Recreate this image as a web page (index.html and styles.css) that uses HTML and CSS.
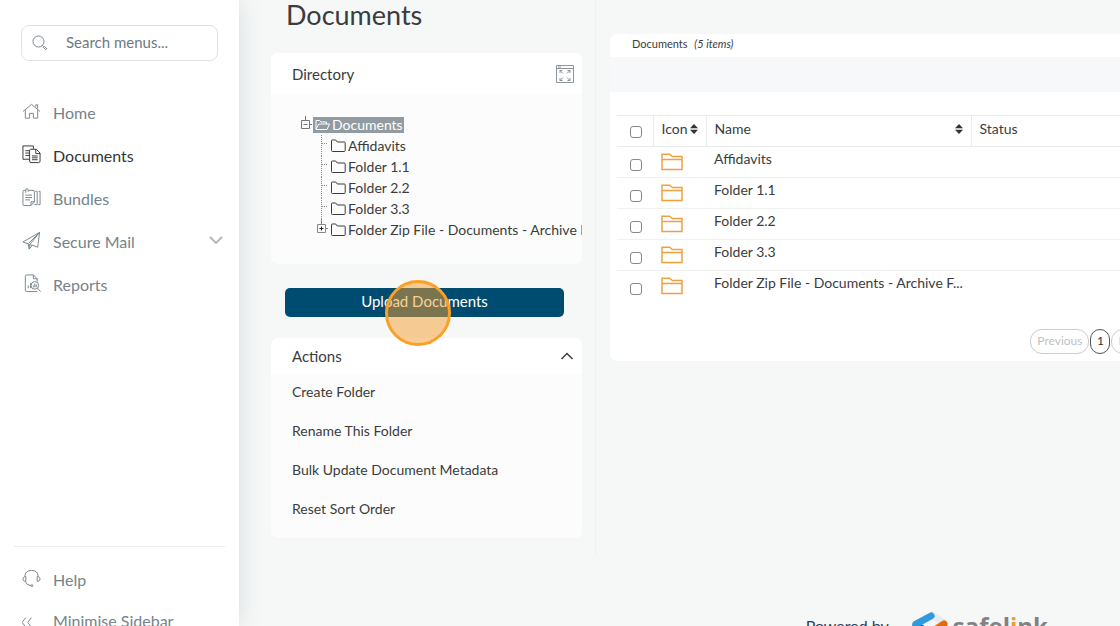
FILE: index.html
```html
<!DOCTYPE html>
<html lang="en">
<head>
<meta charset="utf-8">
<title>Documents</title>
<link rel="stylesheet" href="styles.css">
</head>
<body>
<svg class="defs" aria-hidden="true">
  <symbol id="folder" viewBox="0 0 15 13"><path d="M.5 11V1.800q0-.8.8-.8h3.400l1.600 2h7q.9 0 .9.900v7.600q0 1-1 1H1.500q-1 0-1-1z"/></symbol>
  <symbol id="folder-lg" viewBox="0 0 22 18"><path d="M1 16.500V1.200h7.500l3 2.300H21v13zM1 6.500h20"/></symbol>
  <symbol id="sort" viewBox="0 0 8 10"><path d="M4 0l4 4.200H0zM4 10l4-4.200H0z"/></symbol>
  <symbol id="branch" viewBox="0 0 14 21"><path d="M4.500 0v21M5 8.500h6" stroke-dasharray="1 1"/></symbol>
</svg>
<aside class="sidebar">
  <label class="search">
    <svg class="icon search-icon" viewBox="0 0 16 16"><circle cx="6.500" cy="6.500" r="5.500"/><path d="M10.500 10.500l1 1M11.300 12.300l1-1 2.500 2.500-1 1z"/></svg>
    <input type="text" placeholder="Search menus..." aria-label="Search menus">
  </label>
  <nav class="menu">
    <a class="menu-item" href="#"><svg class="icon" viewBox="0 0 20 20"><path d="M1 10l9-7.500 9 7.500M3.500 8.500v8.500h4.500v-5h4v5h4.500V8.500M14.500 5V3h2v4"/></svg>Home</a>
    <a class="menu-item current" href="#"><svg class="icon" viewBox="0 0 20 20"><path d="M8 15H1V1h11v3M3.500 6H8M3.500 8.500H8M3.500 11H8M9 4.500h6l4 4V17q0 1.500-1.500 1.500H9.500Q8 18.500 8 17V6q0-1.500 1-1.500zM14.500 4.500v4.500H19M10.500 11.500h6M10.500 13.500h6M10.500 15.500h6"/></svg>Documents</a>
    <a class="menu-item" href="#"><svg class="icon" viewBox="0 0 20 20"><path d="M4 2.500H2q-1 0-1 1v14q0 1 1 1h7.500l3.500-4V3.500q0-1-1-1H7M9.500 18v-3.500H13M4 5V2.200q0-1.500 1.200-1.500T6.500 2v2M3.500 7.500h7M3.500 10h7M3.500 12.500h5M14 3.500h2v14h-3M17.500 3.500H19v14h-2"/></svg>Bundles</a>
    <a class="menu-item" href="#"><svg class="icon" viewBox="0 0 20 20"><path d="M1 11.500L18.500 1.500 16.500 17l-5.500-2-3.500 4-1-5.500zM6.500 13.500l12-12L8 14.500V19M8 14.500l3 .5"/></svg>Secure Mail<svg class="chevron" viewBox="0 0 14 8"><path d="M1 1l6 6 6-6"/></svg></a>
    <a class="menu-item" href="#"><svg class="icon" viewBox="0 0 20 20"><path d="M16 18.500H5Q3.500 18.500 3.500 17V2.500Q3.500 1 5 1h7l4 4v3M12 1v4h4M6.500 15v-3M9 15V9.500"/><circle cx="13.500" cy="12" r="4"/><path d="M12 14v-2M13.500 14v-4M15 14v-3M16.500 15l3 3.500"/></svg>Reports</a>
  </nav>
  <nav class="menu menu-bottom">
    <a class="menu-item" href="#"><svg class="icon" viewBox="0 0 20 20"><path d="M3 8q0-6.500 7-6.500T17 8M3 8Q1 8.500 1 10.500T3 13h1V8zM17 8q2 .5 2 2.500T17 13h-1V8zM3.500 13q1 4 6 4.500"/><circle cx="10.500" cy="17.500" r="1"/></svg>Help</a>
    <a class="menu-item" href="#"><svg class="icon" viewBox="0 0 20 20"><path d="M4 8l-4 5 4 5M10 8l-4 5 4 5"/></svg>Minimise Sidebar</a>
  </nav>
</aside>
<main class="main">
  <div class="columns">
    <section class="left">
      <h1>Documents</h1>
      <div class="card directory">
        <header class="card-head"><h2>Directory</h2>
          <button class="plain" aria-label="Expand directory"><svg class="expand" viewBox="0 0 18 18"><path d="M.5.500h17v17H.5zM.5 3.500h17M2 2h3M4 8V5.500h2.500M4 5.500l3 3M14 8V5.500h-2.500M14 5.500l-3 3M4 13v2.500h2.500M4 15.500l3-3M14 13v2.500h-2.500M14 15.500l-3-3"/></svg></button>
        </header>
        <div class="tree">
          <div class="tree-row root"><svg class="toggle" viewBox="0 0 12 21"><path d="M4.500 2v4M.5 6.500h8v8h-8zM2.500 10.500h4M9 10.500h2"/></svg><a class="selected" href="#"><svg class="folder" viewBox="0 0 15 13"><path d="M1 11V2.500h3.500L6 4h5.500v2M1 11l3-5h10.500L12 11.500H1z"/></svg>Documents</a></div>
          <ul>
            <li class="tree-row"><svg class="branch"><use href="#branch"/></svg><a href="#"><svg class="folder"><use href="#folder"/></svg>Affidavits</a></li>
            <li class="tree-row"><svg class="branch"><use href="#branch"/></svg><a href="#"><svg class="folder"><use href="#folder"/></svg>Folder 1.1</a></li>
            <li class="tree-row"><svg class="branch"><use href="#branch"/></svg><a href="#"><svg class="folder"><use href="#folder"/></svg>Folder 2.2</a></li>
            <li class="tree-row"><svg class="branch"><use href="#branch"/></svg><a href="#"><svg class="folder"><use href="#folder"/></svg>Folder 3.3</a></li>
            <li class="tree-row"><svg class="branch" viewBox="0 0 14 21"><path d="M4.500 0v5M.5 5.500h8v8h-8zM9 9.500h2"/><path class="plus" d="M2.500 9.500h4M4.500 7.500v4"/></svg><a href="#"><svg class="folder"><use href="#folder"/></svg>Folder Zip File - Documents - Archive Folder</a></li>
          </ul>
        </div>
      </div>
      <div class="upload">
        <button class="upload-button">Upload Documents</button>
        <span class="click-marker"></span>
      </div>
      <div class="card">
        <header class="card-head actions-head"><h2>Actions</h2>
          <button class="plain" aria-label="Collapse actions"><svg class="chevron-up" viewBox="0 0 14 8"><path d="M1.500 7L7 1.500 12.500 7"/></svg></button>
        </header>
        <div class="actions">
          <a href="#">Create Folder</a>
          <a href="#">Rename This Folder</a>
          <a href="#">Bulk Update Document Metadata</a>
          <a href="#">Reset Sort Order</a>
        </div>
      </div>
    </section>
    <section class="listing">
      <header class="listing-title">Documents <em>(5 items)</em></header>
      <div class="toolbar"></div>
      <table>
        <thead><tr>
          <th class="check"><input type="checkbox" aria-label="Select all"></th>
          <th class="type"><span>Icon<svg class="sort"><use href="#sort"/></svg></span></th>
          <th class="name"><span>Name<svg class="sort"><use href="#sort"/></svg></span></th>
          <th>Status</th>
        </tr></thead>
        <tbody>
          <tr><td class="check"><input type="checkbox" aria-label="Select Affidavits"></td><td class="type"><svg class="folder-lg"><use href="#folder-lg"/></svg></td><td class="name">Affidavits</td><td></td></tr>
          <tr><td class="check"><input type="checkbox" aria-label="Select Folder 1.1"></td><td class="type"><svg class="folder-lg"><use href="#folder-lg"/></svg></td><td class="name">Folder 1.1</td><td></td></tr>
          <tr><td class="check"><input type="checkbox" aria-label="Select Folder 2.2"></td><td class="type"><svg class="folder-lg"><use href="#folder-lg"/></svg></td><td class="name">Folder 2.2</td><td></td></tr>
          <tr><td class="check"><input type="checkbox" aria-label="Select Folder 3.3"></td><td class="type"><svg class="folder-lg"><use href="#folder-lg"/></svg></td><td class="name">Folder 3.3</td><td></td></tr>
          <tr><td class="check"><input type="checkbox" aria-label="Select Folder Zip File"></td><td class="type"><svg class="folder-lg"><use href="#folder-lg"/></svg></td><td class="name">Folder Zip File - Documents - Archive F...</td><td></td></tr>
        </tbody>
      </table>
      <div class="pager">
        <button disabled>Previous</button>
        <button class="page">1</button>
        <button disabled>Next</button>
      </div>
    </section>
  </div>
  <footer class="footer">
    <span>Powered by</span>
    <svg class="logo" viewBox="0 0 36 36"><path d="M20 7L32 15" stroke="#e9eaeb" stroke-width="7"/><path d="M4 17L16 24" stroke="#0c6db8" stroke-width="7"/><path d="M4 16L19 8" stroke="#2f9bdc" stroke-width="7"/><path d="M32 16L18 25" stroke="#e06c10" stroke-width="7"/></svg>
    <span class="brand">safel<span class="brand-i">i</span>nk</span>
  </footer>
</main>
</body>
</html>
```
FILE: styles.css
```css
* { box-sizing: border-box; }
body {
  margin: 0;
  height: 100vh;
  overflow: hidden;
  display: flex;
  background: #f6f8f8;
  color: #3a3c3d;
  font: 14px/20px Lato, "Open Sans", sans-serif;
}
a { color: inherit; text-decoration: none; }
button, input { font: inherit; }
h1, h2 { margin: 0; font-weight: 400; }
ul { margin: 0; padding: 0; list-style: none; }
svg { flex: none; fill: none; stroke: currentColor; }
.defs { position: absolute; width: 0; height: 0; }

.sidebar {
  flex: none;
  width: 239px;
  height: 100vh;
  overflow: hidden;
  display: flex;
  flex-direction: column;
  background: #fff;
  box-shadow: 0 0 24px rgba(40, 60, 60, .14);
  z-index: 1;
}
.search {
  flex: none;
  display: flex;
  align-items: center;
  height: 36px;
  margin: 25px 21px 30px;
  padding-left: 10px;
  border: 1px solid #dfe2e3;
  border-radius: 8px;
  color: #78858b;
}
.search .search-icon { width: 16px; height: 16px; }
.search input {
  flex: 1;
  min-width: 0;
  padding: 0 0 3px 18px;
  border: 0;
  outline: 0;
  background: none;
  font-size: 15px;
}
.search input::placeholder { color: #6d7a81; opacity: 1; }
.menu { flex: 1; display: flex; flex-direction: column; font-size: 16px; }
.menu-item {
  flex: none;
  display: flex;
  align-items: center;
  gap: 12px;
  height: 43px;
  padding: 0 16px 0 22px;
  color: #76838a;
}
.current { color: #333536; }
.icon { width: 19px; height: 19px; }
.menu .icon { margin-bottom: 3px; }
.chevron { width: 14px; height: 8px; margin: 0 0 3px auto; color: #b3babd; stroke-width: 2; }
.menu-bottom {
  flex: none;
  height: 80px;
  margin: 0 14px;
  padding-top: 12px;
  border-top: 1px solid #ebeded;
  overflow: hidden;
}
.menu-bottom .menu-item { height: 41px; padding: 0 0 0 8px; }

.main { flex: 1; min-width: 0; overflow: hidden; }
.columns { display: flex; align-items: flex-start; gap: 14px; }
.left {
  flex: none;
  width: 357px;
  height: 557px;
  padding: 0 13px 0 32px;
  border-right: 1px solid #eff2f2;
}
h1 { padding-left: 15px; margin-bottom: 23px; font-size: 27px; line-height: 30px; }
h2 { font-size: 15px; line-height: 20px; }
.card { overflow: hidden; border-radius: 7px; background: #fcfcfc; }
.card-head {
  display: flex;
  align-items: center;
  justify-content: space-between;
  height: 41px;
  padding: 0 8px 0 21px;
  background: #fff;
}
.actions-head { height: 36px; }
.plain { display: flex; padding: 0; border: 0; background: none; color: #3c4042; }
.expand { width: 18px; height: 18px; color: #8b959a; }
.chevron-up { width: 14px; height: 8px; stroke-width: 1.500; }
.tree { padding: 20px 0 24px 30px; white-space: nowrap; }
.tree ul { padding-left: 16px; }
.tree-row { display: flex; align-items: center; height: 21px; }
.tree-row a { display: flex; align-items: center; gap: 2px; }
.tree-row .selected { height: 16px; padding: 0 1px 0 2px; background: #929ba1; color: #fff; }
.toggle { width: 12px; height: 21px; color: #777; }
.branch { width: 14px; height: 21px; color: #888; }
.plus { stroke: #222; }
.folder { width: 15px; height: 13px; }
.upload { position: relative; margin: 24px 18px 21px 14px; }
.upload-button {
  display: block;
  width: 100%;
  height: 29px;
  padding: 0 0 3px;
  border: 0;
  border-radius: 5px;
  background: #004b70;
  color: #fff;
  font-size: 15px;
}
.click-marker {
  position: absolute;
  left: 100px;
  top: -8px;
  width: 66px;
  height: 66px;
  border: 3px solid #fba026;
  border-radius: 50%;
  background: rgba(244, 158, 46, .5);
}
.actions { display: flex; flex-direction: column; padding-bottom: 8px; }
.actions a { padding: 8px 21px 11px; }

.listing {
  flex: 1;
  min-width: 0;
  margin: 34px -31px 0 0;
  padding-bottom: 7px;
  border-radius: 7px;
  background: #fff;
}
.listing-title { height: 23px; padding-left: 22px; font-size: 11px; line-height: 20px; }
.listing-title em { padding-left: 4px; }
.toolbar { height: 35px; margin-bottom: 23px; background: #f7f8fa; }
table { width: calc(100% - 7px); margin-left: 7px; border-collapse: collapse; table-layout: fixed; }
tr { height: 31px; }
th, td { padding: 0 8px 6px; border-bottom: 1px solid #f0f1f1; text-align: left; font-weight: 400; }
th { padding-bottom: 4px; border: solid #e9eaea; border-width: 1px 1px 1px 0; }
tbody tr:last-child td { border-bottom: 0; }
.check { width: 36px; padding: 5px 0 0 13px; }
th.check { padding-top: 2px; }
input[type="checkbox"] {
  appearance: none;
  display: block;
  width: 12px;
  height: 12px;
  margin: 0;
  border: 1px solid #888;
  border-radius: 3px;
  background: #fff;
}
.type { width: 53px; }
.name { width: 265px; }
th span { display: flex; align-items: center; justify-content: space-between; }
th.type { padding-right: 8px; }
.sort { width: 8px; height: 10px; fill: #333; stroke: none; }
.folder-lg { display: block; width: 22px; height: 18px; margin-top: 6px; color: #efa140; stroke-width: 1.500; }
.pager { display: flex; justify-content: flex-end; gap: 1px; margin-top: 27px; }
.pager button {
  height: 25px;
  padding: 0 6px;
  border: 1px solid #ccc;
  border-radius: 12px;
  background: #fff;
  color: #bfc1c2;
  font-size: 12px;
}
.pager .page { width: 20px; padding: 0; border-color: #555; color: #333; }
.footer {
  display: flex;
  justify-content: flex-end;
  align-items: center;
  gap: 5px;
  height: 30px;
  margin-top: 54px;
  padding-right: 72px;
  color: #2d4157;
  font-size: 16px;
}
.logo { width: 36px; height: 36px; margin-left: 18px; stroke-linecap: round; }
.brand { color: #808285; font: 700 24px/30px "Open Sans", sans-serif; }
.brand-i { color: #ef9b38; }
```
